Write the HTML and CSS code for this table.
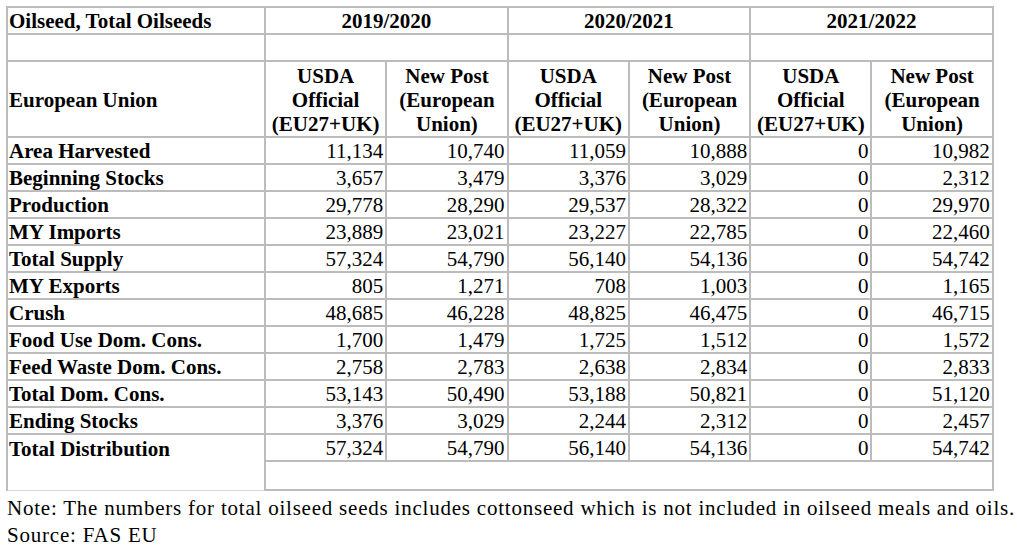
FILE: index.html
```html
<!DOCTYPE html>
<html>
<head>
<meta charset="utf-8">
<link rel="stylesheet" href="styles.css">
</head>
<body>
<div class="page">
<table class="grid">
<colgroup>
<col class="c-label">
<col class="c-num"><col class="c-num"><col class="c-num"><col class="c-num"><col class="c-num"><col class="c-num">
</colgroup>
<tr class="r-title">
<th class="lab">Oilseed, Total Oilseeds</th>
<th colspan="2" class="yr">2019/2020</th>
<th colspan="2" class="yr">2020/2021</th>
<th colspan="2" class="yr">2021/2022</th>
</tr>
<tr class="r-blank">
<td class="lab">&nbsp;</td>
<td colspan="2">&nbsp;</td>
<td colspan="2">&nbsp;</td>
<td colspan="2">&nbsp;</td>
</tr>
<tr class="r-head">
<th class="lab">European Union</th>
<th class="hd">USDA<br>Official<br>(EU27+UK)</th>
<th class="hd">New Post<br>(European<br>Union)</th>
<th class="hd">USDA<br>Official<br>(EU27+UK)</th>
<th class="hd">New Post<br>(European<br>Union)</th>
<th class="hd">USDA<br>Official<br>(EU27+UK)</th>
<th class="hd">New Post<br>(European<br>Union)</th>
</tr>
<tr><th class="lab">Area Harvested</th><td>11,134</td><td>10,740</td><td>11,059</td><td>10,888</td><td>0</td><td>10,982</td></tr>
<tr><th class="lab">Beginning Stocks</th><td>3,657</td><td>3,479</td><td>3,376</td><td>3,029</td><td>0</td><td>2,312</td></tr>
<tr><th class="lab">Production</th><td>29,778</td><td>28,290</td><td>29,537</td><td>28,322</td><td>0</td><td>29,970</td></tr>
<tr><th class="lab">MY Imports</th><td>23,889</td><td>23,021</td><td>23,227</td><td>22,785</td><td>0</td><td>22,460</td></tr>
<tr><th class="lab">Total Supply</th><td>57,324</td><td>54,790</td><td>56,140</td><td>54,136</td><td>0</td><td>54,742</td></tr>
<tr><th class="lab">MY Exports</th><td>805</td><td>1,271</td><td>708</td><td>1,003</td><td>0</td><td>1,165</td></tr>
<tr><th class="lab">Crush</th><td>48,685</td><td>46,228</td><td>48,825</td><td>46,475</td><td>0</td><td>46,715</td></tr>
<tr><th class="lab">Food Use Dom. Cons.</th><td>1,700</td><td>1,479</td><td>1,725</td><td>1,512</td><td>0</td><td>1,572</td></tr>
<tr><th class="lab">Feed Waste Dom. Cons.</th><td>2,758</td><td>2,783</td><td>2,638</td><td>2,834</td><td>0</td><td>2,833</td></tr>
<tr><th class="lab">Total Dom. Cons.</th><td>53,143</td><td>50,490</td><td>53,188</td><td>50,821</td><td>0</td><td>51,120</td></tr>
<tr><th class="lab">Ending Stocks</th><td>3,376</td><td>3,029</td><td>2,244</td><td>2,312</td><td>0</td><td>2,457</td></tr>
<tr class="r-last"><th class="lab">Total Distribution</th><td>57,324</td><td>54,790</td><td>56,140</td><td>54,136</td><td>0</td><td>54,742</td></tr>
<tr class="r-foot"><td class="lab blank-lab">&nbsp;</td><td colspan="6">&nbsp;</td></tr>
</table>
<p class="note">Note: The numbers for total oilseed seeds includes cottonseed which is not included in oilseed meals and oils.<br>Source: FAS EU</p>
</div>
</body>
</html>
```
FILE: styles.css
```css
html, body {
  margin: 0;
  padding: 0;
  background: #ffffff;
  overflow: hidden;
}
.page {
  padding: 6px 0 0 6px;
  font-family: "Liberation Serif", "Times New Roman", serif;
  color: #000;
  font-size: 21px;
}
.grid {
  border-collapse: collapse;
  table-layout: fixed;
  width: 986px;
  font-family: inherit;
  font-size: 21px;
  line-height: 24px;
}
.c-label { width: 258px; }
.c-num { width: 121.3px; }
.grid th, .grid td {
  border: 2px solid #bcbcbc;
  padding: 1px 2px 0 2px;
  white-space: nowrap;
  overflow: hidden;
}
.grid td { text-align: right; font-weight: normal; }
.grid th { font-weight: bold; }
.grid th.lab, .grid td.lab { text-align: left; padding-left: 1px; }
.grid th.yr { text-align: center; }
.grid th.hd { text-align: center; padding-top: 2px; }
.r-blank td { text-align: left; }
.r-foot td { height: 26px; }
.r-foot td.blank-lab {
  border-top-style: hidden;
  border-bottom: 1px solid #d8d8d8;
}
.note {
  margin: 4px 0 0 1px;
  font-size: 21px;
  line-height: 27px;
  letter-spacing: 0.78px;
  white-space: nowrap;
}
```
